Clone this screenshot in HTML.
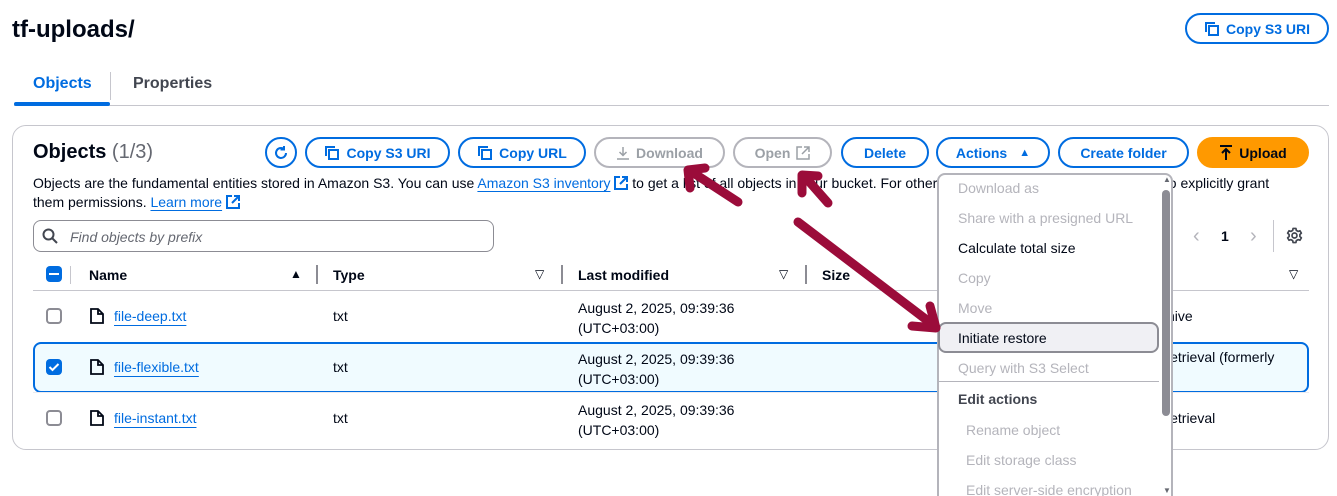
<!DOCTYPE html>
<html style="width:1337px;height:496px;overflow:hidden"><head><meta charset="utf-8">
<style>
*{box-sizing:border-box;margin:0;padding:0}
body{width:1337px;height:496px;overflow:hidden;background:#fff;font-family:"Liberation Sans",Arial,sans-serif;color:#000716;position:relative;font-size:14px}
.a{position:absolute;white-space:nowrap}
.btn{position:absolute;height:31px;border:2px solid #006ce0;border-radius:16px;color:#006ce0;font-weight:bold;font-size:14px;display:flex;align-items:center;justify-content:center;gap:6px;background:#fff}
.dis{border-color:#b4b4bb;color:#9ba0a6}
.cb{position:absolute;width:16px;height:16px;border:2px solid #8c8c94;border-radius:4px;background:#fff}
.cbon{border:none;background:#006ce0}
.lnk{color:#006ce0;text-decoration:underline;text-decoration-style:solid;text-underline-offset:3px}
.file{color:#006ce0;text-decoration:underline;text-underline-offset:4px}
.mi{position:absolute;left:958px;font-size:14px;color:#b4b4bb}
.ext{display:inline-block;vertical-align:-2px}
</style></head><body>
<div class="a" style="left:12px;top:16px;font-size:24px;font-weight:bold">tf-uploads/</div>
<div class="btn" style="left:1185px;top:13px;width:144px">
<svg width="16" height="16" viewBox="0 0 16 16" fill="none" stroke="#006ce0" stroke-width="2"><path d="M2 11V2h9"/><rect x="5" y="5" width="9" height="9"/></svg>Copy S3 URI</div>

<div class="a" style="left:33px;top:75px;font-weight:bold;font-size:16px;color:#006ce0">Objects</div>
<div class="a" style="left:133px;top:75px;font-weight:bold;font-size:16px;color:#424650">Properties</div>
<div class="a" style="left:110px;top:72px;width:1px;height:28px;background:#c6c6cd"></div>
<div class="a" style="left:14px;top:105px;width:1315px;height:1px;background:#c6c6cd"></div>
<div class="a" style="left:14px;top:102px;width:96px;height:4px;background:#006ce0;border-radius:2px"></div>

<div class="a" style="left:12px;top:125px;width:1317px;height:325px;border:1px solid #c6c6cd;border-radius:14px;background:#fff"></div>
<div class="a" style="left:33px;top:141px;font-size:20px"><b>Objects</b> <span style="color:#656871">(1/3)</span></div>

<div class="btn" style="left:265px;top:137px;width:32px;padding:0">
<svg width="18" height="18" viewBox="0 0 18 18" fill="none" stroke="#006ce0" stroke-width="2"><path d="M14 9a5 5 0 1 1-2-4"/><path d="M12 2v3.5h-3.5"/></svg></div>
<div class="btn" style="left:305px;top:137px;width:145px"><svg width="16" height="16" viewBox="0 0 16 16" fill="none" stroke="#006ce0" stroke-width="2"><path d="M2 11V2h9"/><rect x="5" y="5" width="9" height="9"/></svg>Copy S3 URI</div>
<div class="btn" style="left:458px;top:137px;width:128px"><svg width="16" height="16" viewBox="0 0 16 16" fill="none" stroke="#006ce0" stroke-width="2"><path d="M2 11V2h9"/><rect x="5" y="5" width="9" height="9"/></svg>Copy URL</div>
<div class="btn dis" style="left:594px;top:137px;width:131px"><svg width="14" height="14" viewBox="0 0 14 14" fill="none" stroke="#9ba0a6" stroke-width="1.5"><path d="M7 1v8M3.5 6 7 9.5 10.5 6M1 13h12"/></svg>Download</div>
<div class="btn dis" style="left:733px;top:137px;width:99px">Open <svg width="14" height="14" viewBox="0 0 14 14" fill="none" stroke="#9ba0a6" stroke-width="1.5"><path d="M6 1H1v12h12V8M8 1h5v5M13 1 6 8"/></svg></div>
<div class="btn" style="left:841px;top:137px;width:88px">Delete</div>
<div class="btn" style="left:936px;top:137px;width:114px">Actions <span style="font-size:11px;margin-left:6px">▲</span></div>
<div class="btn" style="left:1058px;top:137px;width:131px">Create folder</div>
<div class="btn" style="left:1197px;top:137px;width:112px;background:#ff9900;border-color:#ff9900;color:#000716"><svg width="14" height="16" viewBox="0 0 14 16" fill="none" stroke="#000716" stroke-width="2"><path d="M1 1h12M7 15V4M3 8l4-4 4 4"/></svg>Upload</div>

<div class="a" style="left:33px;top:174px;line-height:19px">Objects are the fundamental entities stored in Amazon S3. You can use <span class="lnk">Amazon S3 inventory</span> <svg class="ext" width="14" height="14" viewBox="0 0 14 14" fill="none" stroke="#006ce0" stroke-width="2"><path d="M6 1H1v12h12V8M8 1h5v5M13 1 6 8"/></svg> to get a list of all objects in your bucket. For others to access your objects, you'll need to explicitly grant<br>them permissions. <span class="lnk">Learn more</span> <svg class="ext" width="14" height="14" viewBox="0 0 14 14" fill="none" stroke="#006ce0" stroke-width="2"><path d="M6 1H1v12h12V8M8 1h5v5M13 1 6 8"/></svg></div>

<div class="a" style="left:33px;top:220px;width:461px;height:32px;border:1px solid #8c8c94;border-radius:8px"></div>
<svg class="a" style="left:42px;top:228px" width="16" height="16" viewBox="0 0 16 16" fill="none" stroke="#424650" stroke-width="2"><circle cx="6.5" cy="6.5" r="5"/><path d="M10 10l5 5"/></svg>
<div class="a" style="left:70px;top:229px;font-style:italic;color:#656871">Find objects by prefix</div>

<div class="a" style="left:1193px;top:225px;color:#b4b4bb;font-size:20px">‹</div>
<div class="a" style="left:1221px;top:228px;font-weight:bold">1</div>
<div class="a" style="left:1250px;top:225px;color:#b4b4bb;font-size:20px">›</div>
<div class="a" style="left:1273px;top:220px;width:1px;height:32px;background:#c6c6cd"></div>
<svg class="a" style="left:1286px;top:227px" width="17" height="17" viewBox="0 0 24 24" fill="none" stroke="#424650" stroke-width="2.4" stroke-linejoin="round"><circle cx="12" cy="12" r="3.5"/><path d="M10 2h4l.6 2.8 2.4 1.4 2.7-.9 2 3.4-2.1 1.9v2.8l2.1 1.9-2 3.4-2.7-.9-2.4 1.4L14 22h-4l-.6-2.8-2.4-1.4-2.7.9-2-3.4 2.1-1.9v-2.8L2.3 8.7l2-3.4 2.7.9 2.4-1.4z"/></svg>

<div class="cb cbon" style="left:46px;top:266px"><div style="position:absolute;left:3px;top:7px;width:10px;height:2px;background:#fff"></div></div>
<div class="a" style="top:266px;width:1px;height:18px;background:#c6c6cd;left:70px"></div>
<div class="a" style="left:89px;top:267px;font-weight:bold">Name</div>
<div class="a" style="left:290px;top:267px;font-size:12px">▲</div>
<div class="a" style="left:316px;top:265px;width:2px;height:19px;background:#8c8c94"></div>
<div class="a" style="left:333px;top:267px;font-weight:bold">Type</div>
<div class="a" style="left:535px;top:267px;font-size:12px">▽</div>
<div class="a" style="left:561px;top:265px;width:2px;height:19px;background:#8c8c94"></div>
<div class="a" style="left:578px;top:267px;font-weight:bold">Last modified</div>
<div class="a" style="left:779px;top:267px;font-size:12px">▽</div>
<div class="a" style="left:805px;top:265px;width:2px;height:19px;background:#8c8c94"></div>
<div class="a" style="left:822px;top:267px;font-weight:bold">Size</div>
<div class="a" style="left:1289px;top:267px;font-size:12px">▽</div>
<div class="a" style="left:33px;top:290px;width:1276px;height:1px;background:#c6c6cd"></div>

<div class="a" style="left:33px;top:342px;width:1276px;height:51px;border:2px solid #006ce0;border-radius:8px;background:#f0fbff"></div>
<div class="a" style="left:33px;top:392px;width:1276px;height:1px;background:#ebebf0"></div>

<div class="cb" style="left:46px;top:308px"></div>
<div class="cb cbon" style="left:46px;top:359px"><svg width="16" height="16" viewBox="0 0 16 16" fill="none" stroke="#fff" stroke-width="2"><path d="M3.5 8l3 3 6-6"/></svg></div>
<div class="cb" style="left:46px;top:410px"></div>

<svg class="a" style="left:90px;top:308px" width="14" height="16" viewBox="0 0 14 16" fill="none" stroke="#000716" stroke-width="1.8"><path d="M1 1h7l5 5v9H1zM8 1v5h5"/></svg>
<svg class="a" style="left:90px;top:359px" width="14" height="16" viewBox="0 0 14 16" fill="none" stroke="#000716" stroke-width="1.8"><path d="M1 1h7l5 5v9H1zM8 1v5h5"/></svg>
<svg class="a" style="left:90px;top:410px" width="14" height="16" viewBox="0 0 14 16" fill="none" stroke="#000716" stroke-width="1.8"><path d="M1 1h7l5 5v9H1zM8 1v5h5"/></svg>

<div class="a file" style="left:114px;top:308px">file-deep.txt</div>
<div class="a file" style="left:114px;top:359px">file-flexible.txt</div>
<div class="a file" style="left:114px;top:410px">file-instant.txt</div>
<div class="a" style="left:333px;top:308px">txt</div>
<div class="a" style="left:333px;top:359px">txt</div>
<div class="a" style="left:333px;top:410px">txt</div>
<div class="a" style="left:578px;top:298px;line-height:20px">August 2, 2025, 09:39:36<br>(UTC+03:00)</div>
<div class="a" style="left:578px;top:349px;line-height:20px">August 2, 2025, 09:39:36<br>(UTC+03:00)</div>
<div class="a" style="left:578px;top:400px;line-height:20px">August 2, 2025, 09:39:36<br>(UTC+03:00)</div>
<div class="a" style="left:1160px;top:308px">chive</div>
<div class="a" style="left:1160px;top:349px">Retrieval (formerly</div>
<div class="a" style="left:1160px;top:410px">Retrieval</div>

<div class="a" style="left:937px;top:173px;width:236px;height:340px;border:2px solid #b4b4bb;border-radius:8px;background:#fff"></div>
<div class="a" style="left:1162px;top:190px;width:8px;height:226px;background:#8c8c94;border-radius:4px"></div>
<div class="a" style="left:1163px;top:175px;font-size:8px;color:#656871">▲</div>
<div class="a" style="left:1163px;top:486px;font-size:8px;color:#656871">▼</div>
<div class="mi" style="top:180px">Download as</div>
<div class="mi" style="top:210px">Share with a presigned URL</div>
<div class="mi" style="top:240px;color:#000716">Calculate total size</div>
<div class="mi" style="top:270px">Copy</div>
<div class="mi" style="top:300px">Move</div>
<div class="a" style="left:938px;top:322px;width:221px;height:31px;background:#f0f0f4;border:2px solid #8c8c94;border-radius:8px"></div>
<div class="mi" style="top:330px;color:#000716">Initiate restore</div>
<div class="mi" style="top:360px">Query with S3 Select</div>
<div class="a" style="left:939px;top:381px;width:220px;height:1px;background:#b4b4bb"></div>
<div class="mi" style="top:391px;color:#424650;font-weight:bold">Edit actions</div>
<div class="mi" style="top:422px;left:966px">Rename object</div>
<div class="mi" style="top:452px;left:966px">Edit storage class</div>
<div class="mi" style="top:482px;left:966px">Edit server-side encryption</div>

<svg class="a" style="left:0;top:0" width="1337" height="496" fill="none" stroke="#9b0c3a" stroke-width="9" stroke-linecap="round" stroke-linejoin="round">
<path d="M738 202 L692 172"/><path d="M690 188 L688 170 L705 168"/>
<path d="M828 203 L806 178"/><path d="M802 193 L802 175 L818 176"/>
<path d="M798 222 L932 324"/><path d="M912 326 L936 328 L930 306"/>
</svg>
</body></html>
